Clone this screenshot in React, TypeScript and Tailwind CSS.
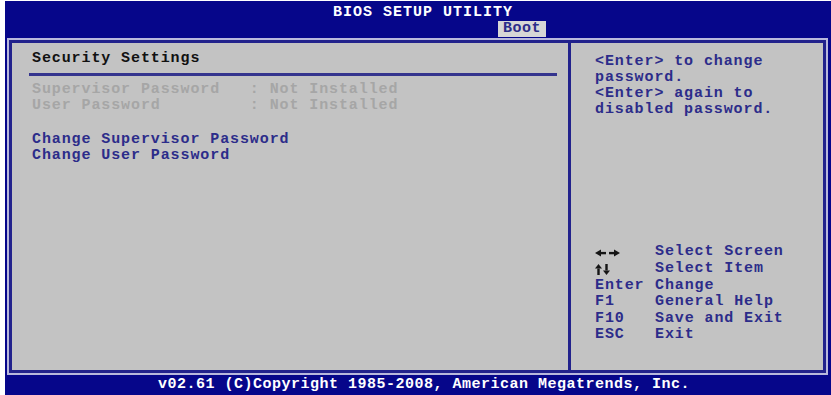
import React from "react";

const LeftRight = () => (
  <svg width="26" height="8" viewBox="0 0 26 8" className="inline-block">
    <polygon points="0,4 6,0.5 6,7.5" fill="#151515" />
    <rect x="6" y="2.9" width="5" height="2.4" fill="#151515" />
    <rect x="14" y="2.9" width="5" height="2.4" fill="#151515" />
    <polygon points="19,0.5 25,4 19,7.5" fill="#151515" />
  </svg>
);

const UpDown = () => (
  <svg width="16" height="11" viewBox="0 0 16 11" className="inline-block">
    <polygon points="3.5,0 0,4.5 7,4.5" fill="#151515" />
    <rect x="2.3" y="4.5" width="2.4" height="6.5" fill="#151515" />
    <rect x="10.3" y="0" width="2.4" height="6.5" fill="#151515" />
    <polygon points="8,6.5 15,6.5 11.5,11" fill="#151515" />
  </svg>
);

const helpRows: { key: React.ReactNode; desc: string }[] = [
  { key: <LeftRight />, desc: "Select Screen" },
  { key: <UpDown />, desc: "Select Item" },
  { key: "Enter", desc: "Change" },
  { key: "F1", desc: "General Help" },
  { key: "F10", desc: "Save and Exit" },
  { key: "ESC", desc: "Exit" },
];

export default function App() {
  return (
    <div className="w-[831px] h-[395px] bg-white pl-[5px] pt-[1px] overflow-hidden font-['Liberation_Mono','Courier_New',monospace] font-bold text-[15px]">
      <div className="h-[394px] bg-[#06068a] flex flex-col">
        {/* header */}
        <div className="h-[37px] flex flex-col">
          <div className="pt-[4px] h-[20px] leading-[16px] text-white text-center pl-[10px] tracking-[1px] whitespace-pre">
            BIOS SETUP UTILITY
          </div>
          <div className="h-[16px] flex">
            <div className="ml-[493px] w-[48px] h-[16px] bg-[#d6d6d6] text-[#2c2c8a] leading-[16px] text-center tracking-[0.5px]">
              Boot
            </div>
          </div>
        </div>

        {/* main panel */}
        <div className="ml-[2px] w-[821px] h-[337px] border-2 border-[#b8b8dc]">
          <div className="h-full border-[3px] border-[#22228c] bg-[#c3c3c3] flex">
            {/* left */}
            <div className="w-[556px] pt-[8px] pl-[20px] tracking-[0.9px] whitespace-pre">
              <div className="leading-[16px] text-[#111111]">Security Settings</div>
              <div className="mt-[6px] ml-[-3px] w-[528px] h-[3px] bg-[#34348e]" />
              <div className="mt-[6px] leading-[16px] text-[#a6a6a6]">
                Supervisor Password   : Not Installed
              </div>
              <div className="leading-[16px] text-[#a6a6a6]">
                User Password         : Not Installed
              </div>
              <div className="h-[18px]" />
              <div className="leading-[16px] text-[#2c2c8a]">Change Supervisor Password</div>
              <div className="leading-[16px] text-[#2c2c8a]">Change User Password</div>
            </div>

            {/* divider */}
            <div className="w-[3px] bg-[#22228c]" />

            {/* right */}
            <div className="flex-1 pl-[24px] pt-[11px] pb-[26px] flex flex-col justify-between text-[#2c2c8a] tracking-[0.9px] whitespace-pre">
              <div className="leading-[16px]">
                <div>{"<Enter> to change"}</div>
                <div>password.</div>
                <div>{"<Enter> again to"}</div>
                <div>disabled password.</div>
              </div>
              <div>
                {helpRows.map((r, i) => (
                  <div key={i} className="flex h-[16.6px] leading-[16.6px] items-center">
                    <div className="w-[60px] flex items-center">{r.key}</div>
                    <div>{r.desc}</div>
                  </div>
                ))}
              </div>
            </div>
          </div>
        </div>

        {/* footer */}
        <div className="flex-1 text-white text-center leading-[20px] pl-[12px] tracking-[0.5px] whitespace-pre">
          v02.61 (C)Copyright 1985-2008, American Megatrends, Inc.
        </div>
      </div>
    </div>
  );
}
